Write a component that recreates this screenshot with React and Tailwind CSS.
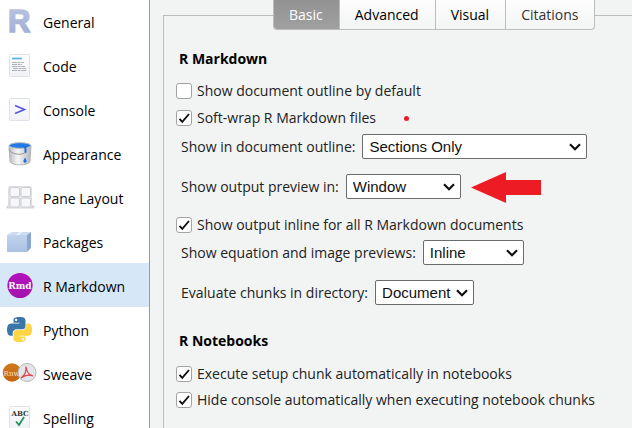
import React from "react";

const DocFrame = () => (
  <rect x="9.5" y="11.5" width="20" height="22" rx="1" fill="url(#paper)" stroke="#dfe1e6" />
);

const icons = {
  general: (
    <text x="8" y="33" fontFamily="Liberation Sans, sans-serif" fontWeight="700" fontSize="31" fill="url(#rfill)" stroke="url(#rfill)" strokeWidth="1.5">
      R
    </text>
  ),
  code: (
    <>
      <DocFrame />
      <path d="M12 15.500h10" stroke="#4fb2d8" strokeWidth="1.600" />
      <path d="M12 19.500h12M12 21.500h10M12 23.500h13M13 25.500h13M12 27.500h15" stroke="#a4a7b0" strokeWidth="0.900" strokeDasharray="5 0.600 3 0.600" />
    </>
  ),
  console: (
    <>
      <DocFrame />
      <path d="M15 18.500l9.500 4-9.500 4" fill="none" stroke="#5a55e0" strokeWidth="1.600" />
    </>
  ),
  appearance: (
    <>
      <path d="M9 15l1 15.500c1 4.500 19 4.500 20 0L31 15z" fill="url(#metal)" stroke="#a6a9ae" strokeWidth="0.800" />
      <ellipse cx="20" cy="14.500" rx="10.800" ry="2.800" fill="#2379e6" stroke="#b4b7bc" />
      <path d="M23 15.500h3.500v5.500a1 1 0 0 1-2 0v-3.500z" fill="#1c6fe0" />
      <path d="M9 18c1 5 12 7 16 3.500" fill="none" stroke="#94979d" />
      <path d="M25 26.500l1.500 3a1.600 1.600 0 1 1-3 0z" fill="#1c6fe0" />
    </>
  ),
  pane: (
    <>
      <path d="M8 32h25" stroke="#cfd1d5" strokeWidth="3" strokeLinecap="round" />
      <rect x="8.500" y="11.500" width="23" height="21" rx="2" fill="#e4e6e9" stroke="#dcdee2" />
      <g fill="#f7f7f9" stroke="#cbcdd2">
        <rect x="10" y="12.500" width="9.500" height="9" rx="1.500" />
        <rect x="21" y="12.500" width="9.500" height="9" rx="1.500" />
        <rect x="10" y="23" width="9.500" height="9" rx="1.500" />
        <rect x="21" y="23" width="9.500" height="9" rx="1.500" />
      </g>
    </>
  ),
  packages: (
    <>
      <path d="M7 16h20v17H7z" fill="url(#box)" />
      <path d="M7 16l5-3h19l-4 3z" fill="#cfdcf0" />
      <path d="M16 16l4-3h2l-3 3z" fill="#eef3fa" />
      <path d="M27 16l4-3v16l-4 4z" fill="#8ba6d0" />
    </>
  ),
  rmd: (
    <>
      <circle cx="20" cy="22.500" r="12.600" fill="url(#purple)" />
      <text x="20" y="26" textAnchor="middle" fontFamily="DejaVu Serif, serif" fontWeight="700" fontSize="9" fill="#fff">
        Rmd
      </text>
    </>
  ),
  python: (
    <g transform="translate(7 10) scale(0.225)">
      <path fill="#3b76a8" fillRule="evenodd" d="M54.900 0C50.300 0 46 .4 42.100 1.100 30.800 3.100 28.700 7.300 28.700 15v10.300h26.800v3.400H18.600C10.800 28.700 4 33.300 1.900 42.300c-2.500 10.200-2.600 16.500 0 27.200 1.900 7.900 6.400 13.600 14.200 13.600h9.300V70.800c0-8.800 7.600-16.600 16.700-16.600h26.800c7.500 0 13.400-6.100 13.400-13.600V15c0-7.200-6.100-12.700-13.400-13.900C64.300.3 59.500 0 54.900 0zM40.400 8.200c2.800 0 5.100 2.300 5.100 5.100s-2.300 5.100-5.100 5.100-5-2.300-5-5.100 2.200-5.100 5-5.100z" />
      <path fill="#ffd445" fillRule="evenodd" d="M85.600 28.700v11.900c0 9.200-7.800 17-16.700 17H42.100c-7.300 0-13.400 6.200-13.400 13.600v25.500c0 7.300 6.300 11.600 13.400 13.600 8.500 2.500 16.600 3 26.800 0 6.700-1.900 13.400-5.900 13.400-13.600V86.500H55.500v-3.400h40.200c7.800 0 10.700-5.400 13.400-13.600 2.800-8.400 2.700-16.500 0-27.200-1.900-7.800-5.600-13.600-13.400-13.600zM70.600 93.300c2.800 0 5 2.300 5 5.100s-2.200 5.100-5 5.100-5.100-2.300-5.100-5.100 2.300-5.100 5.100-5.100z" />
    </g>
  ),
  sweave: (
    <>
      <circle cx="12" cy="21.500" r="9.300" fill="url(#orange)" />
      <text x="11.500" y="24.500" textAnchor="middle" fontFamily="DejaVu Serif, serif" fontSize="7" fill="#f7e3cd">
        Rnw
      </text>
      <circle cx="27" cy="21.500" r="9" fill="#e3e5ea" stroke="#b3b6bc" />
      <path d="M26 15.500c.5 5 3 8.500 7 9.500-4-1.500-8-1-12 2 3.500-2.500 5.500-6.500 5-11.500z" fill="none" stroke="#e0424a" strokeWidth="1.200" />
    </>
  ),
  spelling: (
    <>
      <DocFrame />
      <text x="20" y="20.500" textAnchor="middle" fontFamily="DejaVu Serif, serif" fontWeight="700" fontSize="7" fill="#333">
        ABC
      </text>
      <path d="M16 26.500l3 3.500 5-8" fill="none" stroke="#23945c" strokeWidth="1.800" />
    </>
  ),
};

const sections = [
  ["General", "general"],
  ["Code", "code"],
  ["Console", "console"],
  ["Appearance", "appearance"],
  ["Pane Layout", "pane"],
  ["Packages", "packages"],
  ["R Markdown", "rmd"],
  ["Python", "python"],
  ["Sweave", "sweave"],
  ["Spelling", "spelling"],
];

const IconDefs = () => (
  <svg className="absolute size-0" aria-hidden="true">
    <defs>
      <linearGradient id="paper" x2="0" y2="1"><stop stopColor="#fdfdfd" /><stop offset="1" stopColor="#f0f2f6" /></linearGradient>
      <linearGradient id="rfill" x2="0" y2="1"><stop stopColor="#bcc5e0" /><stop offset="1" stopColor="#9dacd4" /></linearGradient>
      <linearGradient id="metal"><stop stopColor="#b9bbbf" /><stop offset="0.4" stopColor="#f7f7f8" /><stop offset="1" stopColor="#b4b6ba" /></linearGradient>
      <linearGradient id="box" x2="0" y2="1"><stop stopColor="#c0d2ec" /><stop offset="1" stopColor="#abc2e4" /></linearGradient>
      <linearGradient id="purple" x2="0" y2="1"><stop stopColor="#b312bb" /><stop offset="1" stopColor="#a512b0" /></linearGradient>
      <linearGradient id="orange" x2="0" y2="1"><stop stopColor="#d07a1c" /><stop offset="1" stopColor="#c46410" /></linearGradient>
    </defs>
  </svg>
);

const Check = ({ label, checked, children }) => (
  <div className="flex h-[26px] items-center pl-3">
    <label className="flex items-center gap-[5px]">
      <span className="relative flex">
        <input type="checkbox" defaultChecked={checked} className="peer size-4 appearance-none rounded-[3px] border border-[#a3a3a3] bg-white" />
        <svg viewBox="0 0 16 16" className="pointer-events-none absolute inset-0 hidden size-4 peer-checked:block" aria-hidden="true">
          <path d="M3.500 8.800l2.800 3L13 4" fill="none" stroke="#111" strokeWidth="1.900" />
        </svg>
      </span>
      {label}
    </label>
    {children}
  </div>
);

const Select = ({ id, label, options, width, children }) => (
  <div className="flex h-[25px] items-center gap-[7px] pl-[17px]">
    <label htmlFor={id}>{label}</label>
    <span className={"relative " + width}>
      <select id={id} className="block h-[25px] w-full appearance-none rounded-[2px] border border-[#6b6b6b] bg-white pl-1.5 font-['Liberation_Sans',Arial,sans-serif] text-[15px] leading-[22px] text-[#111]">
        {options.map((o) => <option key={o}>{o}</option>)}
      </select>
      <svg viewBox="0 0 12 8" className="pointer-events-none absolute top-[9px] right-1.5 h-2 w-3" aria-hidden="true">
        <path d="M1 1.200l5 5 5-5" fill="none" stroke="#111" strokeWidth="2.200" />
      </svg>
      {children}
    </span>
  </div>
);

const tab = "h-full border-r border-[#bcbcbc] pl-[15px] pr-4 last:border-r-0";

export default function App() {
  return (
    <div className="flex h-screen overflow-hidden bg-[#f2f4f4] font-['Open_Sans','Noto_Sans',sans-serif] text-[14px] leading-5 text-[#222]">
      <IconDefs />
      <nav className="w-[150px] shrink-0 border-r border-[#999] bg-white text-black">
        <ul className="-mt-px">
          {sections.map(([name, icon]) => (
            <li key={name}>
              <button className={"flex h-11 w-full items-center text-left whitespace-nowrap " + (icon === "rmd" ? "bg-[#d6e8f8]" : "")}>
                <svg viewBox="0 0 43 44" className="h-11 w-[43px] shrink-0" aria-hidden="true">{icons[icon]}</svg>
                <span className="pt-[3px]">{name}</span>
              </button>
            </li>
          ))}
        </ul>
      </nav>
      <main className="flex-1 pt-[15px] pl-[13px]">
        <section className="h-full border-t border-l border-[#b8bcbc] whitespace-nowrap">
          <div className="-mt-4 flex justify-start pl-[109px]">
            <div role="tablist" className="flex h-[30px] overflow-hidden rounded-b-[4px] border border-t-0 border-[#bcbcbc] bg-linear-to-b from-[#fdfdfd] to-[#f3f4f4] text-black">
              <button role="tab" aria-selected="true" className={tab + " bg-linear-to-b from-[#929292] to-[#a0a0a0] text-white"}>Basic</button>
              <button role="tab" className={tab}>Advanced</button>
              <button role="tab" className={tab}>Visual</button>
              <button role="tab" className={tab + " text-[#333]"}>Citations</button>
            </div>
          </div>
          <h2 className="mt-[19px] pl-[15px] font-bold text-black">R Markdown</h2>
          <div className="mt-[9px] flex flex-col gap-px">
            <Check label="Show document outline by default" />
            <Check label="Soft-wrap R Markdown files" checked>
              <span className="ml-7 size-[5px] rounded-full bg-[#ed1c24]" />
            </Check>
          </div>
          <div className="mt-[3px] flex flex-col gap-[15px]">
            <Select id="outline" label="Show in document outline:" width="w-[225px]" options={["Sections Only"]} />
            <Select id="preview" label="Show output preview in:" width="w-[115px]" options={["Window"]}>
              <svg viewBox="0 0 70 31" className="absolute -top-0.5 left-[125px] h-[31px] w-[70px]" aria-hidden="true">
                <path d="M0 15.500L35 0v8h35v15H35v8z" fill="#ed1c24" />
              </svg>
            </Select>
          </div>
          <div className="mt-[13px]">
            <Check label="Show output inline for all R Markdown documents" checked />
          </div>
          <div className="mt-0.5 flex flex-col gap-[15px]">
            <Select id="equations" label="Show equation and image previews:" width="w-[101px]" options={["Inline"]} />
            <Select id="directory" label="Evaluate chunks in directory:" width="w-[99px]" options={["Document"]} />
          </div>
          <h2 className="mt-[26px] pl-[15px] font-bold text-black">R Notebooks</h2>
          <div className="mt-2.5">
            <Check label="Execute setup chunk automatically in notebooks" checked />
            <Check label="Hide console automatically when executing notebook chunks" checked />
          </div>
        </section>
      </main>
    </div>
  );
}
